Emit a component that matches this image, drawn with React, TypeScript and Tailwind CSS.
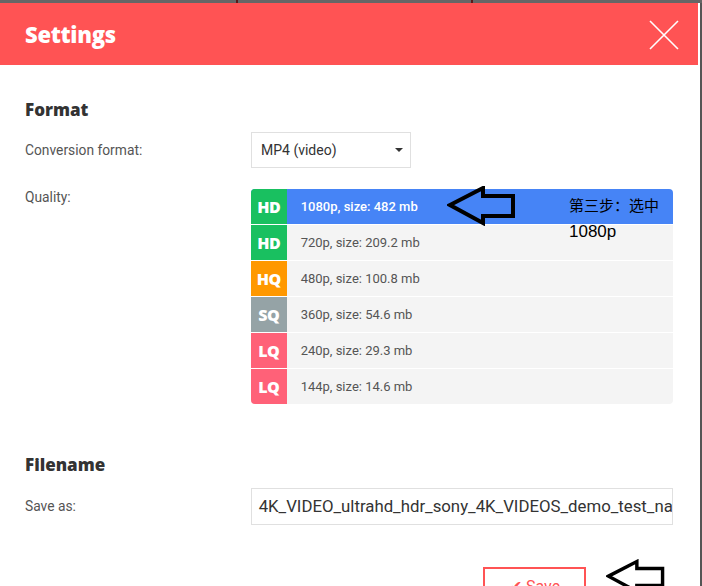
import React from "react"

type Quality = {
    tag: string
    label: string
    color: string
}

const qualities: Quality[] = [
    { tag: "HD", label: "1080p, size: 482 mb", color: "bg-[#19c060]" },
    { tag: "HD", label: "720p, size: 209.2 mb", color: "bg-[#19c060]" },
    { tag: "HQ", label: "480p, size: 100.8 mb", color: "bg-[#ff9800]" },
    { tag: "SQ", label: "360p, size: 54.6 mb", color: "bg-[#95a3a6]" },
    { tag: "LQ", label: "240p, size: 29.3 mb", color: "bg-[#ff6178]" },
    { tag: "LQ", label: "144p, size: 14.6 mb", color: "bg-[#ff6178]" },
]

function HandArrow({ className }: { className: string }) {
    return (
        <svg viewBox="0 0 70 40" className={className}>
            <polygon
                points="3,19 36,2 36,10 66,10 66,30 36,30 36,37"
                fill="none"
                stroke="#000"
                strokeWidth="4"
                strokeLinejoin="miter"
            />
        </svg>
    )
}

export default function App() {
    return (
        <div className="w-[702px] h-[586px] overflow-hidden bg-white flex flex-col font-['Roboto',sans-serif] relative">

            <div className="h-[3px] bg-[#666] shrink-0 flex">
                <div className="w-[236px]" />
                <div className="w-[2px] bg-[#5a1a1a]" />
                <div className="w-[233px]" />
                <div className="w-[2px] bg-[#5a1a1a]" />
            </div>

            <div className="flex flex-1">
                <div className="w-[698px] flex flex-col">

                    <div className="h-[62px] bg-[#ff5354] flex items-center justify-between pl-[25px] pr-[19px] shrink-0">
                        <h1 className="text-white text-[22px] font-extrabold font-['Open_Sans',sans-serif] tracking-[-0.3px]">
                            Settings
                        </h1>
                        <svg width="30" height="30" viewBox="0 0 30 30" className="mt-[2px]">
                            <path d="M1 1 L29 29 M29 1 L1 29" stroke="#fff" strokeWidth="1.6" />
                        </svg>
                    </div>

                    <div className="px-[25px] flex flex-col">

                        <h2 className="mt-[34px] text-[17px] leading-[22px] font-extrabold text-[#333] font-['Open_Sans',sans-serif]">
                            Format
                        </h2>

                        <div className="flex items-center mt-[11px]">
                            <div className="w-[226px] text-[13.8px] text-[#555]">Conversion format:</div>
                            <div className="w-[160px] h-[36px] border border-[#e0e0e0] flex items-center justify-between pl-[9px] pr-[7px] text-[14px] text-[#333]">
                                <span>MP4 (video)</span>
                                <span className="w-0 h-0 border-l-[4px] border-r-[4px] border-t-[4px] border-l-transparent border-r-transparent border-t-[#333]" />
                            </div>
                        </div>

                        <div className="flex items-start mt-[21px]">
                            <div className="w-[226px] text-[13.8px] leading-[16px] text-[#555]">Quality:</div>
                            <div className="w-[423px] flex flex-col gap-px rounded-[4px] overflow-hidden">
                                {qualities.map((q, i) => (
                                    <div
                                        key={i}
                                        className={`h-[35px] flex items-center ${i === 0 ? "bg-[#4684f6] text-white font-medium" : "bg-[#f4f4f4] text-[#555]"}`}
                                    >
                                        <div className={`w-[36px] h-full flex items-center justify-center text-white text-[16px] font-extrabold font-['Open_Sans',sans-serif] tracking-[-0.5px] ${q.color}`}>
                                            {q.tag}
                                        </div>
                                        <span className="ml-[14px] text-[13px]">{q.label}</span>
                                    </div>
                                ))}
                            </div>
                        </div>

                        <h2 className="mt-[50px] text-[17px] leading-[22px] font-extrabold text-[#333] font-['Open_Sans',sans-serif]">
                            Filename
                        </h2>

                        <div className="flex items-center mt-[12px]">
                            <div className="w-[226px] text-[13.8px] text-[#555]">Save as:</div>
                            <div className="w-[423px] h-[37px] border border-[#e0e0e0] flex items-center pl-[7px] overflow-hidden whitespace-nowrap text-[16.8px] text-[#333]">
                                4K_VIDEO_ultrahd_hdr_sony_4K_VIDEOS_demo_test_na
                            </div>
                        </div>

                        <div className="flex mt-[42px] pl-[458px]">
                            <button className="w-[103px] h-[40px] border-2 border-[#ff5354] text-[#ff5354] text-[16px] flex items-center justify-center gap-1">
                                <span>✔</span>
                                <span>Save</span>
                            </button>
                        </div>
                    </div>
                </div>
                <div className="w-[2px]" />
                <div className="w-[2px] bg-[#555]" />
            </div>

            <HandArrow className="absolute left-[447px] top-[186px] w-[70px] h-[40px]" />
            <div className="absolute left-[569px] top-[196px] text-[15px] leading-[18px] text-black font-['Noto_Sans_CJK_SC',sans-serif]">
                第三步：选中
            </div>
            <div className="absolute left-[569px] top-[222px] text-[17px] leading-[20px] text-black font-['Liberation_Sans',sans-serif]">
                1080p
            </div>
            <HandArrow className="absolute left-[606px] top-[559px] w-[60px] h-[36px]" />
        </div>
    )
}
